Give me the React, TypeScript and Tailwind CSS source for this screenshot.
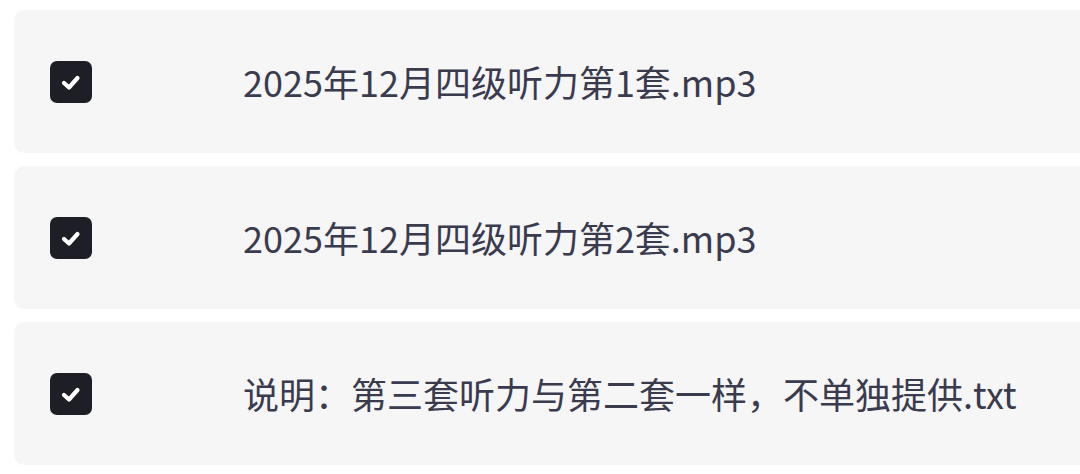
import React from 'react';

const files = [
  '2025年12月四级听力第1套.mp3',
  '2025年12月四级听力第2套.mp3',
  '说明：第三套听力与第二套一样，不单独提供.txt',
];

function CheckBox() {
  return (
    <div className="w-[42px] h-[42px] shrink-0 rounded-[7px] bg-[#1e1f26] flex items-center justify-center">
      <svg width="22" height="18" viewBox="0 0 22 18" fill="none" className="mt-[3px]">
        <path d="M4 9 L9 13.5 L17.5 4" stroke="#ffffff" strokeWidth="4.2" strokeLinecap="round" strokeLinejoin="round" />
      </svg>
    </div>
  );
}

export default function App() {
  return (
    <div className="w-[1080px] h-[474px] bg-white overflow-hidden pt-[10px] pl-[14px]">
      <div className="flex flex-col gap-[13px] w-[1090px]">
        {files.map(name => (
          <div key={name} className="h-[143px] rounded-[10px] bg-[#f6f6f7] flex items-center pl-[36px]">
            <CheckBox />
            <span
              className="ml-[151px] -mt-[2px] text-[36px] leading-none text-[#3a3b4e] whitespace-nowrap"
              style={{ fontFamily: '"Noto Sans CJK SC", "Noto Sans", sans-serif' }}
            >
              {name}
            </span>
          </div>
        ))}
      </div>
    </div>
  );
}
